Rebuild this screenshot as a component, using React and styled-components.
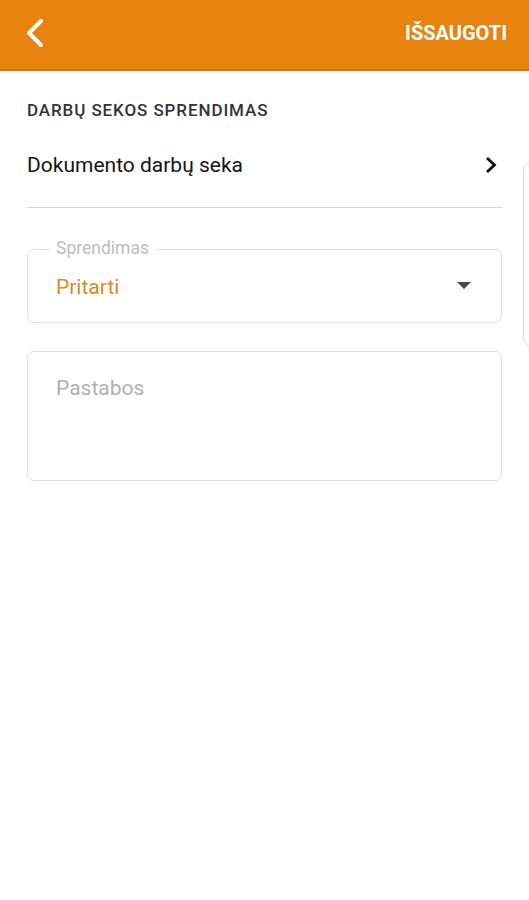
import React from "react";
import styled, { createGlobalStyle } from "styled-components";

const GlobalStyle = createGlobalStyle`
  html, body {
    margin: 0;
    padding: 0;
    background: #fff;
    font-family: Roboto, "Noto Sans", sans-serif;
  }
`;

const App = () => {
  return (
    <>
      <GlobalStyle />
      <Screen>
        <Header>
          <BackButton aria-label="Atgal">
            <svg width="22" height="32" viewBox="0 0 22 32">
              <path
                d="M17 4 L5 16 L17 28"
                fill="none"
                stroke="#fff"
                strokeWidth="4"
                strokeLinecap="round"
                strokeLinejoin="round"
              />
            </svg>
          </BackButton>
          <SaveButton>IŠSAUGOTI</SaveButton>
        </Header>
        <Pager>
          <Page>
            <SectionTitle>DARBŲ SEKOS SPRENDIMAS</SectionTitle>
            <LinkRow>
              <span>Dokumento darbų seka</span>
              <svg width="14" height="20" viewBox="0 0 14 20">
                <path
                  d="M3 3 L10.5 10 L3 17"
                  fill="none"
                  stroke="#111"
                  strokeWidth="2.8"
                />
              </svg>
            </LinkRow>
            <Divider />
            <SelectField>
              <FieldLabel>Sprendimas</FieldLabel>
              <SelectValue>Pritarti</SelectValue>
              <Caret />
            </SelectField>
            <NotesField>
              <Placeholder>Pastabos</Placeholder>
            </NotesField>
          </Page>
          <PeekCard />
        </Pager>
      </Screen>
    </>
  );
};

export default App;

const Screen = styled.div`
  width: 529px;
  height: 900px;
  overflow: hidden;
  background: #fff;
`;

const Header = styled.div`
  height: 69px;
  background: #e8830f;
  border-bottom: 2px solid #d9760b;
  display: flex;
  align-items: center;
  justify-content: space-between;
  padding: 0 22px 0 24px;
  box-sizing: content-box;
`;

const BackButton = styled.div`
  display: flex;
  align-items: center;
  margin-top: -3px;
`;

const SaveButton = styled.div`
  color: #fff;
  font-weight: 700;
  font-size: 20px;
  margin-top: -3px;
`;

const Pager = styled.div`
  display: flex;
  align-items: flex-start;
`;

const Page = styled.div`
  width: 475px;
  flex-shrink: 0;
  margin-left: 27px;
  margin-right: 21px;
  display: flex;
  flex-direction: column;
`;

const SectionTitle = styled.div`
  margin-top: 27px;
  font-size: 17px;
  letter-spacing: 0.9px;
  font-weight: 500;
  color: #333;
  line-height: 24px;
`;

const LinkRow = styled.div`
  display: flex;
  align-items: center;
  justify-content: space-between;
  margin-top: 28px;
  height: 30px;
  font-size: 21px;
  color: #151515;
  padding-right: 4px;
`;

const Divider = styled.div`
  height: 1px;
  background: #d8d8d8;
  margin-top: 27px;
`;

const SelectField = styled.div`
  position: relative;
  margin-top: 41px;
  height: 74px;
  box-sizing: border-box;
  border: 1px solid #dedede;
  border-radius: 7px;
  display: flex;
  align-items: center;
  padding: 0 30px 0 28px;
`;

const FieldLabel = styled.span`
  position: absolute;
  top: -13px;
  left: 21px;
  padding: 0 7px;
  background: #fff;
  font-size: 17.5px;
  color: #bdbdbd;
  line-height: 22px;
`;

const SelectValue = styled.div`
  flex: 1;
  font-size: 21px;
  color: #d78d25;
  margin-top: 2px;
`;

const Caret = styled.div`
  width: 0;
  height: 0;
  border-left: 7px solid transparent;
  border-right: 7px solid transparent;
  border-top: 7px solid #4a4a4a;
  margin-top: -2px;
`;

const NotesField = styled.div`
  margin-top: 28px;
  height: 130px;
  box-sizing: border-box;
  border: 1px solid #dedede;
  border-radius: 7px;
  padding: 23px 28px;
`;

const Placeholder = styled.div`
  font-size: 21px;
  line-height: 26px;
  color: #b0b0b0;
`;

const PeekCard = styled.div`
  flex-shrink: 0;
  width: 300px;
  height: 184px;
  margin-top: 91px;
  box-sizing: border-box;
  border: 1px solid #dcdcdc;
  border-radius: 8px;
`;
